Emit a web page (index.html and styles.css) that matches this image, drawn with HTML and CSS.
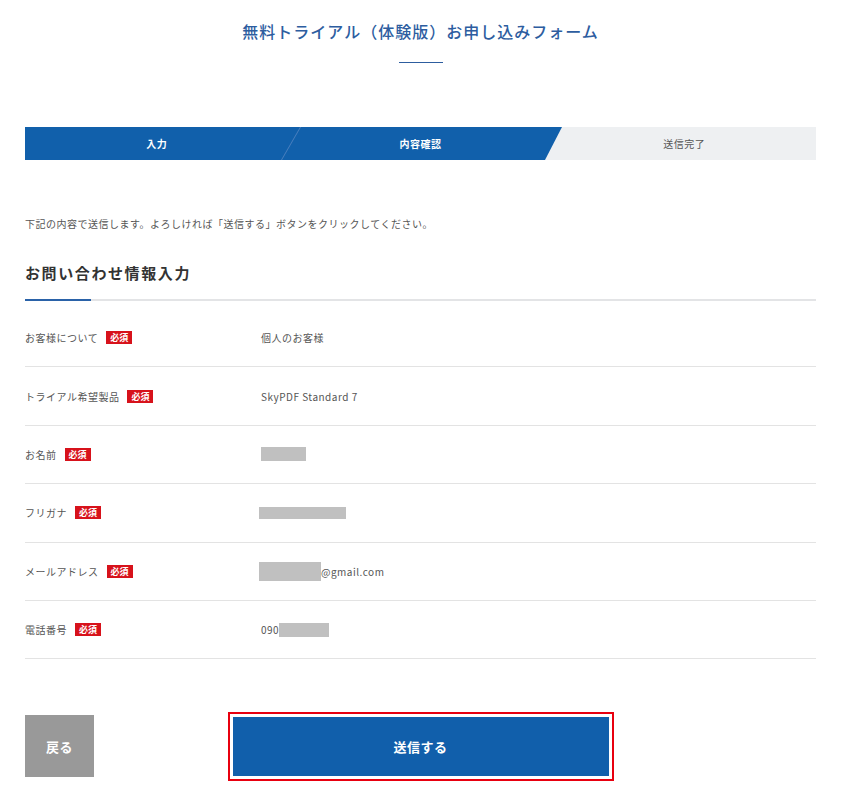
FILE: index.html
```html
<!DOCTYPE html>
<html lang="ja">
<head>
<meta charset="utf-8">
<title>無料トライアル（体験版）お申し込みフォーム</title>
<link rel="stylesheet" href="styles.css">
</head>
<body>
<div class="page">
  <header class="header">
    <h1 class="title">無料トライアル（体験版）お申し込みフォーム</h1>
    <div class="title-line"></div>
  </header>

  <div class="steps">
    <div class="step step-done">入力</div>
    <div class="step step-current">内容確認</div>
    <div class="step step-next">送信完了</div>
  </div>

  <p class="intro">下記の内容で送信します。よろしければ「送信する」ボタンをクリックしてください。</p>

  <h2 class="section-title">お問い合わせ情報入力</h2>
  <div class="section-rule"></div>

  <div class="rows">
    <div class="row">
      <div class="label">お客様について<span class="req">必須</span></div>
      <div class="value">個人のお客様</div>
    </div>
    <div class="row">
      <div class="label">トライアル希望製品<span class="req">必須</span></div>
      <div class="value">SkyPDF Standard 7</div>
    </div>
    <div class="row">
      <div class="label">お名前<span class="req">必須</span></div>
      <div class="value"><span class="mask mask-name"></span></div>
    </div>
    <div class="row">
      <div class="label">フリガナ<span class="req">必須</span></div>
      <div class="value"><span class="mask mask-kana"></span></div>
    </div>
    <div class="row">
      <div class="label">メールアドレス<span class="req">必須</span></div>
      <div class="value"><span class="mask mask-mail"></span>@gmail.com</div>
    </div>
    <div class="row">
      <div class="label">電話番号<span class="req">必須</span></div>
      <div class="value">090<span class="mask mask-tel"></span></div>
    </div>
  </div>

  <div class="actions">
    <button class="btn-back" type="button">戻る</button>
    <button class="btn-submit" type="button">送信する</button>
    <div></div>
  </div>
</div>
</body>
</html>
```

FILE: styles.css
```css
* { box-sizing: border-box; }

body {
  margin: 0;
  background: #fff;
  font-family: "Noto Sans CJK JP", "Noto Sans", sans-serif;
  letter-spacing: 0.5px;
  color: #555;
}

.page {
  width: 842px;
  padding: 0 26px 20px 25px;
}

.header {
  padding-top: 19px;
  text-align: center;
}

.title {
  margin: 0;
  font-size: 16px;
  line-height: 24px;
  font-weight: 500;
  letter-spacing: 1px;
  color: #2d5d9f;
}

.title-line {
  width: 44px;
  height: 1px;
  margin: 19px auto 0;
  background: #2d5d9f;
}

.steps {
  position: relative;
  display: flex;
  height: 33px;
  margin-top: 64px;
  background: #eef0f2;
}

.steps::before {
  content: "";
  position: absolute;
  inset: 0;
  background: #1160ab;
  clip-path: polygon(0 0, 537px 0, 520px 100%, 0 100%);
}

.steps::after {
  content: "";
  position: absolute;
  inset: 0;
  background: #4a7fbe;
  clip-path: polygon(275px 0, 276px 0, 257px 100%, 256px 100%);
}

.step {
  position: relative;
  z-index: 1;
  flex: 1;
  display: flex;
  align-items: center;
  justify-content: center;
  font-size: 10px;
}

.step-done, .step-current {
  color: #fff;
  font-weight: bold;
}

.step-next {
  color: #555;
}

.intro {
  margin: 56px 0 0;
  font-size: 10px;
  line-height: 16px;
  color: #555;
}

.section-title {
  margin: 30px 0 0;
  font-size: 15px;
  line-height: 22px;
  font-weight: bold;
  letter-spacing: 1.6px;
  color: #333;
}

.section-rule {
  height: 2px;
  margin-top: 15px;
  background: linear-gradient(to right, #2a62a8 66px, #e3e4e6 66px);
}

.rows {
  margin-top: 8px;
}

.row {
  display: grid;
  grid-template-columns: 236px 1fr;
  align-items: center;
  height: 58.4px;
  border-bottom: 1px solid #e3e3e3;
}

.label {
  display: flex;
  align-items: center;
  font-size: 10px;
  color: #555;
}

.req {
  display: inline-block;
  margin-left: 8px;
  padding: 0 4px;
  height: 13px;
  line-height: 13px;
  font-size: 9px;
  font-weight: bold;
  letter-spacing: 0;
  color: #fff;
  background: #d7121b;
}

.value {
  display: flex;
  align-items: center;
  font-size: 10px;
  color: #555;
}

.mask {
  display: inline-block;
  background: #c0c0c0;
}

.mask-name { width: 45px; height: 14px; }
.mask-kana { width: 87px; height: 12px; margin-left: -2px; }
.mask-mail { width: 62px; height: 19px; margin-left: -2px; }
.mask-tel { width: 50px; height: 14px; }

.actions {
  display: grid;
  grid-template-columns: 1fr auto 1fr;
  align-items: center;
  margin-top: 56px;
}

.btn-back {
  justify-self: start;
  width: 69px;
  height: 62px;
  border: 0;
  padding: 0;
  background: #999;
  color: #fff;
  font-family: inherit;
  font-size: 13px;
  font-weight: bold;
  letter-spacing: 0.5px;
}

.btn-submit {
  width: 376px;
  height: 59px;
  border: 0;
  padding: 0;
  background: #115fab;
  color: #fff;
  font-family: inherit;
  font-size: 13px;
  font-weight: bold;
  letter-spacing: 0.5px;
  box-shadow: 0 0 0 3px #fff, 0 0 0 5px #e8000f;
}
```
